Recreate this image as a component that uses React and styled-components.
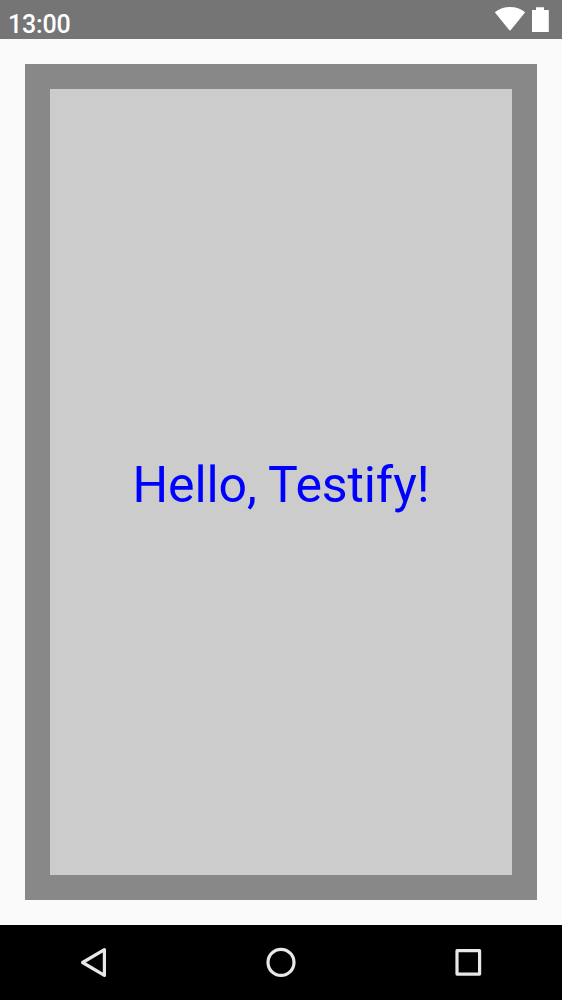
import React from "react";
import styled, { createGlobalStyle } from "styled-components";

const GlobalStyle = createGlobalStyle`
  * { box-sizing: border-box; }
  body { margin: 0; background: #fafafa; font-family: Roboto, "Liberation Sans", sans-serif; }
`;

const Screen = styled.div`
  display: flex;
  flex-direction: column;
  width: 562px;
  height: 1000px;
  overflow: hidden;
  background: #fafafa;
`;

const StatusBar = styled.header`
  display: flex;
  justify-content: space-between;
  flex: 0 0 39px;
  padding: 0 0 0 8px;
  background: #757575;
  color: #fff;
`;

const Clock = styled.time`
  padding-top: 11px;
  font-size: 25px;
  line-height: 28px;
  font-weight: 500;
  letter-spacing: -0.2px;
`;

const StatusIcons = styled.svg`
  width: 72px;
  height: 39px;
  fill: #fff;
`;

const Content = styled.main`
  display: flex;
  flex: 1;
  padding: 25px;
`;

const Frame = styled.section`
  display: flex;
  flex: 1;
  padding: 25px;
  background: #888;
`;

const Panel = styled.div`
  display: flex;
  flex: 1;
  align-items: center;
  justify-content: center;
  background: #ccc;
`;

const Greeting = styled.p`
  margin: 0;
  padding-top: 7px;
  color: #00f;
  font-size: 50px;
  line-height: 59px;
  letter-spacing: -0.1px;
  white-space: nowrap;
`;

const NavBar = styled.nav`
  display: flex;
  align-items: center;
  justify-content: space-between;
  flex: 0 0 75px;
  padding: 0 75px 1px;
  background: #000;
`;

const NavButton = styled.button`
  display: flex;
  padding: 0;
  border: 0;
  background: none;

  svg {
    width: 38px;
    height: 38px;
    fill: none;
    stroke: #e8e8e8;
    stroke-width: 3.2;
    stroke-linejoin: round;
  }
`;

export default function App() {
  return (
    <Screen>
      <GlobalStyle />
      <StatusBar>
        <Clock>13:00</Clock>
        <StatusIcons viewBox="490 0 72 39" aria-hidden="true">
          <path d="M494.8 12.2C503.2 5.3 516.8 5.3 525.2 12.2L511 29.8Q510 31 509 29.8Z" />
          <path d="M536 7.2h8V10h4.8v22H532V10h4Z" />
        </StatusIcons>
      </StatusBar>
      <Content>
        <Frame>
          <Panel>
            <Greeting>Hello, Testify!</Greeting>
          </Panel>
        </Frame>
      </Content>
      <NavBar>
        <NavButton aria-label="Back">
          <svg viewBox="0 0 38 38"><path d="M29.4 6.6V32.4L7.6 19.5Z" /></svg>
        </NavButton>
        <NavButton aria-label="Home">
          <svg viewBox="0 0 38 38"><circle cx="19" cy="19.4" r="13" /></svg>
        </NavButton>
        <NavButton aria-label="Overview">
          <svg viewBox="0 0 38 38"><rect x="8" y="7.7" width="22.6" height="23.4" /></svg>
        </NavButton>
      </NavBar>
    </Screen>
  );
}
